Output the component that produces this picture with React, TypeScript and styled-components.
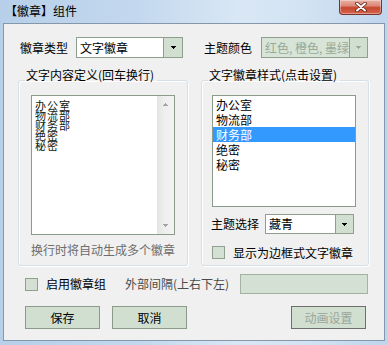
import React from 'react';
import styled, { createGlobalStyle } from 'styled-components';

const Global = createGlobalStyle`
  html, body { margin: 0; padding: 0; background: #c5d9ef; }
  body {
    font-family: "Noto Sans CJK SC", "Noto Sans", sans-serif;
    font-size: 12px;
    color: #000;
  }
  * { box-sizing: border-box; }
`;

const Window = styled.div`
  width: 388px;
  height: 345px;
  display: flex;
  flex-direction: column;
  background: linear-gradient(to right, #b7cfe9 0%, #c3d8ee 35%, #d9e7f5 62%, #d3e3f3 78%, #bfd5ed 100%);
`;

const TitleBar = styled.div`
  height: 23px;
  flex: none;
  display: flex;
  align-items: flex-start;
  justify-content: space-between;
`;

const Title = styled.div`
  padding: 5px 0 0 5px;
  line-height: 12px;
  font-size: 12px;
  color: #000;
`;

const CloseButton = styled.div`
  width: 43px;
  height: 15px;
  margin-right: 6px;
  border: 1px solid #7a3328;
  border-top: none;
  border-radius: 0 0 4px 4px;
  background: linear-gradient(#eab0a3 0%, #dc8a78 40%, #c8472f 55%, #d4654c 100%);
  display: flex;
  align-items: center;
  justify-content: center;
  box-shadow: inset 0 0 0 1px rgba(255, 255, 255, 0.35);
`;

const Client = styled.div`
  flex: 1;
  margin: 0 3px 4px;
  border: 1px solid #8597ab;
  background: #f0f0f0;
  display: flex;
  flex-direction: column;
`;

const TopRow = styled.div`
  display: flex;
  align-items: center;
  height: 21px;
  margin-top: 13px;
  padding-left: 16px;
`;

const Field = styled.div<{ $gap: number; $offset?: number }>`
  display: flex;
  align-items: center;
  gap: ${(p) => p.$gap}px;
  margin-left: ${(p) => p.$offset ?? 0}px;
`;

const Label = styled.span<{ $muted?: boolean }>`
  line-height: 12px;
  white-space: nowrap;
  color: ${(p) => (p.$muted ? '#4a4a4a' : '#000')};
`;

const Combo = styled.div<{ $w: number; $h: number; $disabled?: boolean }>`
  width: ${(p) => p.$w}px;
  height: ${(p) => p.$h}px;
  display: flex;
  border: 1px solid #8e9f8e;
  background: ${(p) => (p.$disabled ? '#d7e4d7' : '#fff')};
`;

const ComboValue = styled.div<{ $disabled?: boolean }>`
  flex: 1;
  min-width: 0;
  overflow: hidden;
  white-space: nowrap;
  padding-left: 3px;
  display: flex;
  align-items: center;
  line-height: 12px;
  color: ${(p) => (p.$disabled ? '#98a998' : '#000')};
`;

const ComboButton = styled.div<{ $w: number }>`
  width: ${(p) => p.$w}px;
  flex: none;
  border-left: 1px solid #8e9f8e;
  background: #d1dfd1;
  display: flex;
  align-items: center;
  justify-content: center;
`;

const GroupsRow = styled.div`
  display: flex;
  height: 186px;
  margin-top: 22px;
  padding-left: 14px;
  gap: 13px;
`;

const GroupBox = styled.div<{ $w: number }>`
  width: ${(p) => p.$w}px;
  border: 1px solid #d5dfe5;
  border-radius: 3px;
  box-shadow: inset 1px 1px 0 #fff, 1px 1px 0 #fff;
  display: flex;
  flex-direction: column;
  align-items: flex-start;
`;

const Legend = styled.div`
  margin: -12px 0 0 6px;
  padding: 0 3px 0 1px;
  line-height: 12px;
  background: #f0f0f0;
  white-space: nowrap;
`;

const TextArea = styled.div`
  margin: 14px 0 0 12px;
  width: 144px;
  height: 140px;
  border: 1px solid #8c9c8c;
  background: #fff;
  display: flex;
`;

const TextLines = styled.div`
  flex: 1;
  padding: 4px 0 0 3px;
  font-size: 11px;
  letter-spacing: 1px;
  line-height: 10px;
  color: #102010;
`;

const ScrollBar = styled.div`
  width: 17px;
  flex: none;
  background: linear-gradient(to right, #e3e3e3, #eeeeee 40%, #f3f3f3);
  display: flex;
  flex-direction: column;
  justify-content: space-between;
`;

const ScrollArrow = styled.div`
  height: 17px;
  display: flex;
  align-items: center;
  justify-content: center;
`;

const Hint = styled.div`
  align-self: stretch;
  margin-top: 9px;
  text-align: center;
  line-height: 12px;
  color: #6d6d6d;
`;

const ListBox = styled.div`
  margin: 14px 0 0 10px;
  width: 144px;
  height: 112px;
  border: 1px solid #8c9c8c;
  background: #fff;
  padding-top: 1px;
`;

const ListItem = styled.div<{ $selected?: boolean }>`
  height: 15px;
  line-height: 15px;
  padding-left: 3px;
  background: ${(p) => (p.$selected ? '#3399ff' : 'transparent')};
  color: ${(p) => (p.$selected ? '#fff' : '#000')};
`;

const ThemeRow = styled.div`
  margin: 7px 0 0 9px;
  display: flex;
  align-items: center;
  gap: 6px;
`;

const CheckRow = styled.div<{ $top: number; $left: number }>`
  margin: ${(p) => p.$top}px 0 0 ${(p) => p.$left}px;
  display: flex;
  align-items: center;
  gap: 8px;
`;

const CheckBox = styled.span`
  width: 13px;
  height: 13px;
  flex: none;
  border: 1px solid #8fa08f;
  background: #d3e0d3;
`;

const OptionsRow = styled.div`
  display: flex;
  align-items: center;
  height: 20px;
  margin-top: 8px;
  padding: 0 16px 0 21px;
`;

const OptionsCheck = styled.div`
  display: flex;
  align-items: center;
  gap: 8px;
  margin-right: 19px;
`;

const SpacingInput = styled.div`
  width: 128px;
  height: 20px;
  margin-left: auto;
  border: 1px solid #a3b3a3;
  background: #d3e0d3;
`;

const ButtonRow = styled.div`
  display: flex;
  margin-top: 12px;
  padding: 0 18px 0 21px;
  gap: 12px;
`;

const Spacer = styled.div`
  flex: 1;
`;

const Button = styled.button<{ $disabled?: boolean }>`
  width: 75px;
  height: 23px;
  padding: 0;
  border: 1px solid ${(p) => (p.$disabled ? '#6e6e6e' : '#8a9b8a')};
  background: #d1dfd1;
  font: inherit;
  line-height: 12px;
  color: ${(p) => (p.$disabled ? '#9ba59b' : '#000')};
`;

const Caret = ({ color = '#000', up = false }: { color?: string; up?: boolean }) => (
  <svg width="5" height="3" viewBox="0 0 5 3" shapeRendering="crispEdges" style={{ transform: up ? 'scaleY(-1)' : undefined }}>
    <rect x="0" y="0" width="5" height="1" fill={color} />
    <rect x="1" y="1" width="3" height="1" fill={color} />
    <rect x="2" y="2" width="1" height="1" fill={color} />
  </svg>
);

const CloseGlyph = () => (
  <svg width="12" height="10" viewBox="0 0 12 10">
    <path d="M2 1.5 L10 8.5 M10 1.5 L2 8.5" stroke="#5a1e14" strokeWidth="3.6" strokeLinecap="round" />
    <path d="M2 1.5 L10 8.5 M10 1.5 L2 8.5" stroke="#fff" strokeWidth="2" strokeLinecap="round" />
  </svg>
);

const textLines = ['办公室', '物流部', '财务部', '绝密', '秘密'];

export default function App() {
  return (
    <>
      <Global />
      <Window>
        <TitleBar>
          <Title>【徽章】组件</Title>
          <CloseButton>
            <CloseGlyph />
          </CloseButton>
        </TitleBar>
        <Client>
          <TopRow>
            <Field $gap={8}>
              <Label>徽章类型</Label>
              <Combo $w={107} $h={21}>
                <ComboValue>文字徽章</ComboValue>
                <ComboButton $w={19}>
                  <Caret />
                </ComboButton>
              </Combo>
            </Field>
            <Field $gap={9} $offset={21}>
              <Label>主题颜色</Label>
              <Combo $w={107} $h={21} $disabled>
                <ComboValue $disabled>红色, 橙色, 墨绿</ComboValue>
                <ComboButton $w={18}>
                  <Caret color="#9aa99a" />
                </ComboButton>
              </Combo>
            </Field>
          </TopRow>

          <GroupsRow>
            <GroupBox $w={170}>
              <Legend>文字内容定义(回车换行)</Legend>
              <TextArea>
                <TextLines>
                  {textLines.map((t) => (
                    <div key={t}>{t}</div>
                  ))}
                </TextLines>
                <ScrollBar>
                  <ScrollArrow>
                    <Caret color="#a3a3a3" up />
                  </ScrollArrow>
                  <ScrollArrow>
                    <Caret color="#a3a3a3" />
                  </ScrollArrow>
                </ScrollBar>
              </TextArea>
              <Hint>换行时将自动生成多个徽章</Hint>
            </GroupBox>

            <GroupBox $w={168}>
              <Legend>文字徽章样式(点击设置)</Legend>
              <ListBox>
                {textLines.map((t) => (
                  <ListItem key={t} $selected={t === '财务部'}>
                    {t}
                  </ListItem>
                ))}
              </ListBox>
              <ThemeRow>
                <Label>主题选择</Label>
                <Combo $w={89} $h={20}>
                  <ComboValue>藏青</ComboValue>
                  <ComboButton $w={18}>
                    <Caret />
                  </ComboButton>
                </Combo>
              </ThemeRow>
              <CheckRow $top={12} $left={10}>
                <CheckBox />
                <Label>显示为边框式文字徽章</Label>
              </CheckRow>
            </GroupBox>
          </GroupsRow>

          <OptionsRow>
            <OptionsCheck>
              <CheckBox />
              <Label>启用徽章组</Label>
            </OptionsCheck>
            <Label $muted>外部间隔(上右下左)</Label>
            <SpacingInput />
          </OptionsRow>

          <ButtonRow>
            <Button>保存</Button>
            <Button>取消</Button>
            <Spacer />
            <Button $disabled>动画设置</Button>
          </ButtonRow>
        </Client>
      </Window>
    </>
  );
}
